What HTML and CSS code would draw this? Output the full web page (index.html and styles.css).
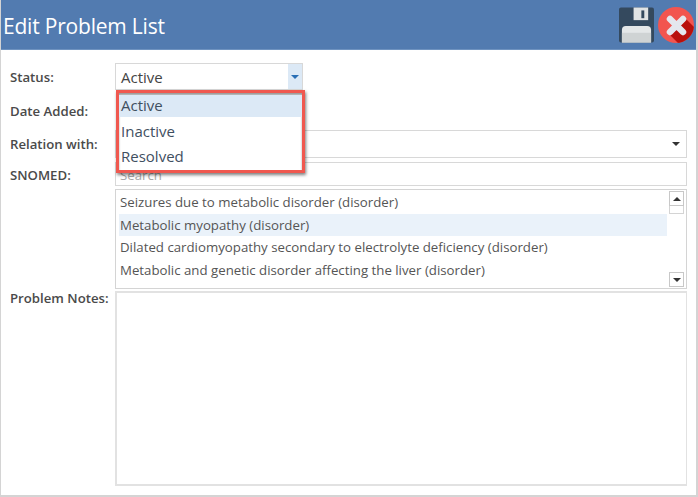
FILE: index.html
```html
<!DOCTYPE html>
<html lang="en">
<head>
    <meta charset="UTF-8">
    <title>Edit Problem List</title>
    <link rel="stylesheet" href="styles.css">
</head>
<body>
  <div class="window">
    <div class="titlebar">
      <span class="title">Edit Problem List</span>
      <div class="actions">
        <svg class="icon-save" width="35" height="36" viewBox="0 0 36 36">
          <path d="M2 0H34a2 2 0 0 1 2 2V34a2 2 0 0 1-2 2H2a2 2 0 0 1-2-2V2a2 2 0 0 1 2-2z" fill="#34495e"/>
          <rect x="15" y="0" width="15" height="13" fill="#e0e3e4"/>
          <rect x="23" y="3" width="3" height="8" fill="#34495e"/>
          <path d="M3 36V23a4 4 0 0 1 4-4H29a4 4 0 0 1 4 4V36z" fill="#e4e7e8"/>
          <rect x="3" y="26" width="30" height="10" fill="#cfd3d4"/>
        </svg>
        <svg class="icon-close" width="36" height="36" viewBox="0 0 36 36">
          <defs>
            <clipPath id="closeClip"><circle cx="18" cy="18" r="18"/></clipPath>
          </defs>
          <circle cx="18" cy="18" r="18" fill="#f2554f"/>
          <path d="M26 10 L42 26 L26 42 L10 26z" fill="#b9100c" clip-path="url(#closeClip)"/>
          <path d="M12 12 L25 25 M25 12 L12 25" stroke="#e4e7ee" stroke-width="6.500" stroke-linecap="round" fill="none"/>
        </svg>
      </div>
    </div>

    <div class="form">
      <label class="lbl lbl-status">Status:</label>
      <div class="status-wrap">
        <div class="select select-status">
          <span>Active</span>
          <span class="arrow-box"><i class="arrow arrow-blue"></i></span>
        </div>
        <div class="dropdown">
          <div class="opt opt-on">Active</div>
          <div class="opt">Inactive</div>
          <div class="opt">Resolved</div>
        </div>
      </div>

      <label class="lbl lbl-date">Date Added:</label>
      <div class="date-space"></div>

      <label class="lbl lbl-relation">Relation with:</label>
      <div class="select select-relation"><i class="arrow"></i></div>

      <label class="lbl lbl-snomed">SNOMED:</label>
      <div class="search">Search</div>

      <div></div>
      <div class="list">
        <div class="rows">
          <div class="row">Seizures due to metabolic disorder (disorder)</div>
          <div class="row row-on">Metabolic myopathy (disorder)</div>
          <div class="row">Dilated cardiomyopathy secondary to electrolyte deficiency (disorder)</div>
          <div class="row">Metabolic and genetic disorder affecting the liver (disorder)</div>
        </div>
        <div class="scroll">
          <span class="scroll-btn"><i class="arrow arrow-up"></i></span>
          <span class="thumb"></span>
          <span class="scroll-btn scroll-end"><i class="arrow"></i></span>
        </div>
      </div>

      <label class="lbl lbl-notes">Problem Notes:</label>
      <div class="notes"></div>
    </div>
  </div>
</body>
</html>
```

FILE: styles.css
```css
* {
    box-sizing: border-box;
}
body {
    margin: 0;
    padding: 0;
    background-color: #fff;
    font-family: "Open Sans", "Noto Sans", sans-serif;
    color: #444;
}
.window {
    width: 698px;
    height: 497px;
    border-left: 1px solid #d4d4d4;
    border-right: 2px solid #d4d4d4;
    border-bottom: 2px solid #d4d4d4;
    overflow: hidden;
}
.titlebar {
    height: 50px;
    background-color: #527bb0;
    border-bottom: 1px solid #6f93c0;
    display: flex;
    align-items: center;
    justify-content: space-between;
    padding: 0 2px 0 2px;
}
.title {
    color: #fff;
    font-size: 21px;
    letter-spacing: -0.2px;
    padding-top: 2px;
}
.actions {
    display: flex;
    gap: 4px;
}
.icon-save, .icon-close {
    display: block;
}
.form {
    display: grid;
    grid-template-columns: 105px 572px;
    padding: 13px 0 0 9px;
    font-size: 13.250px;
}
.lbl {
    font-weight: 600;
    font-size: 13.200px;
    color: #4a4a4a;
    line-height: 18px;
}
.lbl-status {
    padding-top: 5px;
}
.select {
    border: 1px solid #d8d8d8;
    background-color: #fff;
    display: flex;
    align-items: center;
    justify-content: flex-end;
}
.status-wrap {
    position: relative;
    height: 27px;
}
.select-status {
    width: 188px;
    height: 27px;
    justify-content: space-between;
    padding-left: 5px;
    font-size: 15px;
}
.arrow-box {
    width: 14px;
    height: 25px;
    background-color: #dce9f6;
    display: flex;
    align-items: center;
    justify-content: center;
}
.arrow {
    display: block;
    width: 0;
    height: 0;
    border-left: 4px solid transparent;
    border-right: 4px solid transparent;
    border-top: 4px solid #333;
}
.arrow-blue {
    border-top-color: #2a6fb5;
}
.arrow-up {
    border-top: 0;
    border-bottom: 4px solid #333;
}
.dropdown {
    position: absolute;
    left: 1px;
    top: 27px;
    width: 189px;
    height: 83px;
    border: 3px solid #f0584f;
    background-color: #fff;
    box-shadow: 1px 2px 3px rgba(0, 0, 0, 0.5), inset 0 2px 2px rgba(0, 0, 0, 0.4);
    padding: 2px 0 0 0;
    font-size: 15px;
    color: #3f4f5f;
}
.opt {
    height: 25px;
    line-height: 23px;
    padding-left: 2px;
}
.opt-on {
    height: 22px;
    line-height: 20px;
    background-color: #dce9f6;
    margin-bottom: 3px;
}
.lbl-date {
    padding-top: 12px;
    height: 40px;
}
.date-space {
    height: 40px;
}
.lbl-relation {
    padding-top: 5px;
}
.select-relation {
    height: 28px;
    padding-right: 6px;
}
.lbl-snomed {
    padding-top: 8px;
}
.search {
    margin-top: 4px;
    height: 24px;
    border: 1px solid #d8d8d8;
    padding-left: 4px;
    line-height: 24px;
    color: #a8a8a8;
}
.list {
    margin-top: 3px;
    height: 100px;
    border: 1px solid #d4d4d4;
    display: flex;
    justify-content: space-between;
    padding: 1px 2px 1px 3px;
    color: #555;
}
.rows {
    width: 548px;
}
.row {
    height: 22.500px;
    line-height: 23px;
    padding-left: 1px;
}
.row-on {
    background-color: #eaf2fa;
}
.scroll {
    width: 15px;
    display: flex;
    flex-direction: column;
}
.scroll-btn {
    height: 15px;
    border: 1px solid #c8c8c8;
    display: flex;
    align-items: center;
    justify-content: center;
}
.thumb {
    height: 8px;
    border: 1px solid #d4d4d4;
    border-top: 0;
}
.scroll-end {
    margin-top: auto;
}
.lbl-notes {
    padding-top: 0;
}
.notes {
    margin-top: 2px;
    height: 195px;
    border: 1px solid #e2e2e2;
    border-width: 2px 1px 2px 2px;
}
```
